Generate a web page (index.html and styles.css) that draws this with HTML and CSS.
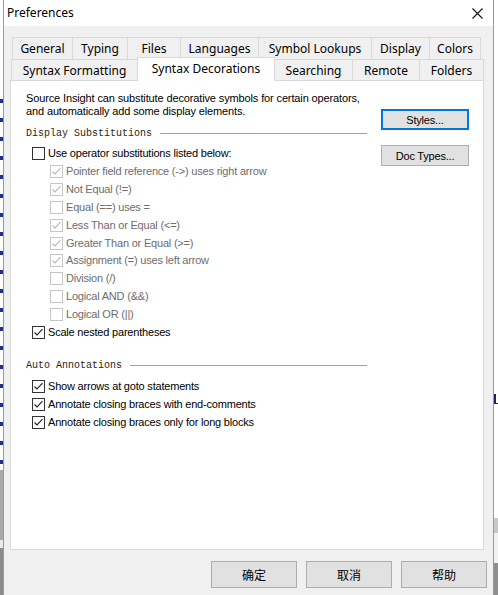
FILE: index.html
```html
<!DOCTYPE html>
<html>
<head>
<meta charset="utf-8">
<title>Preferences</title>
<link rel="stylesheet" href="styles.css">
</head>
<body>
<div class="screen">
  <div class="strip-left"></div>
  <div class="window">
    <div class="titlebar">
      <span class="title">Preferences</span>
      <svg class="close" width="11" height="11" viewBox="0 0 11 11"><path d="M0.5 0.5 L10.5 10.5 M10.5 0.5 L0.5 10.5" stroke="#111" stroke-width="1.1" fill="none"/></svg>
    </div>

    <div class="tabs">
      <div class="tabrow row1">
        <div class="tab w60">General</div>
        <div class="tab w55">Typing</div>
        <div class="tab w53">Files</div>
        <div class="tab w78">Languages</div>
        <div class="tab w113">Symbol Lookups</div>
        <div class="tab w58">Display</div>
        <div class="tab w51">Colors</div>
      </div>
      <div class="tabrow row2">
        <div class="tab w126">Syntax Formatting</div>
        <div class="tab w137 selected">Syntax Decorations</div>
        <div class="tab w78">Searching</div>
        <div class="tab w67">Remote</div>
        <div class="tab w64">Folders</div>
      </div>
    </div>

    <div class="panel">
      <div class="leftcol">
        <p class="intro">Source Insight can substitute decorative symbols for certain operators,<br>and automatically add some display elements.</p>

        <div class="group-head first"><span>Display Substitutions</span><i></i></div>

        <label class="row top main">
          <span class="box"></span>
          <span class="lbl">Use operator substitutions listed below:</span>
        </label>
        <label class="row sub dis">
          <span class="box"><svg viewBox="0 0 13 13"><path d="M2.5 6.5 L5 9 L10.5 3.2" /></svg></span>
          <span class="lbl">Pointer field reference (-&gt;) uses right arrow</span>
        </label>
        <label class="row sub dis">
          <span class="box"><svg viewBox="0 0 13 13"><path d="M2.5 6.5 L5 9 L10.5 3.2" /></svg></span>
          <span class="lbl">Not Equal (!=)</span>
        </label>
        <label class="row sub dis">
          <span class="box"></span>
          <span class="lbl">Equal (==) uses =</span>
        </label>
        <label class="row sub dis">
          <span class="box"><svg viewBox="0 0 13 13"><path d="M2.5 6.5 L5 9 L10.5 3.2" /></svg></span>
          <span class="lbl">Less Than or Equal (&lt;=)</span>
        </label>
        <label class="row sub dis">
          <span class="box"><svg viewBox="0 0 13 13"><path d="M2.5 6.5 L5 9 L10.5 3.2" /></svg></span>
          <span class="lbl">Greater Than or Equal (&gt;=)</span>
        </label>
        <label class="row sub dis">
          <span class="box"><svg viewBox="0 0 13 13"><path d="M2.5 6.5 L5 9 L10.5 3.2" /></svg></span>
          <span class="lbl">Assignment (=) uses left arrow</span>
        </label>
        <label class="row sub dis">
          <span class="box"></span>
          <span class="lbl">Division (/)</span>
        </label>
        <label class="row sub dis">
          <span class="box"></span>
          <span class="lbl">Logical AND (&amp;&amp;)</span>
        </label>
        <label class="row sub dis">
          <span class="box"></span>
          <span class="lbl">Logical OR (||)</span>
        </label>
        <label class="row main">
          <span class="box"><svg viewBox="0 0 13 13"><path d="M2.5 6.5 L5 9 L10.5 3.2" /></svg></span>
          <span class="lbl">Scale nested parentheses</span>
        </label>

        <div class="group-head second"><span>Auto Annotations</span><i></i></div>

        <label class="row main">
          <span class="box"><svg viewBox="0 0 13 13"><path d="M2.5 6.5 L5 9 L10.5 3.2" /></svg></span>
          <span class="lbl">Show arrows at goto statements</span>
        </label>
        <label class="row main">
          <span class="box"><svg viewBox="0 0 13 13"><path d="M2.5 6.5 L5 9 L10.5 3.2" /></svg></span>
          <span class="lbl">Annotate closing braces with end-comments</span>
        </label>
        <label class="row main">
          <span class="box"><svg viewBox="0 0 13 13"><path d="M2.5 6.5 L5 9 L10.5 3.2" /></svg></span>
          <span class="lbl">Annotate closing braces only for long blocks</span>
        </label>
      </div>

      <div class="rightcol">
        <button class="btn focus">Styles...</button>
        <button class="btn">Doc Types...</button>
      </div>
    </div>

    <div class="footer">
      <button class="dbtn">确定</button>
      <button class="dbtn">取消</button>
      <button class="dbtn">帮助</button>
    </div>
  </div>
  <div class="strip-right"><span class="frag"></span></div>
</div>
</body>
</html>
```

FILE: styles.css
```css
* { box-sizing: border-box; }

html, body {
  margin: 0;
  padding: 0;
  width: 498px;
  height: 595px;
  overflow: hidden;
  background: #ffffff;
}

.screen {
  display: flex;
  width: 498px;
  height: 595px;
}

.strip-left {
  width: 3px;
  flex: none;
  background:
    repeating-linear-gradient(180deg, transparent 0 7px, #1f2f8f 7px 11px, transparent 11px 19px) 0 92px / 3px 378px no-repeat,
    linear-gradient(180deg, #ffffff 0 470px, #a9a9a9 470px 540px, #ececec 540px 548px, #8c8c8c 548px 595px);
}

.strip-right {
  width: 4px;
  flex: none;
  position: relative;
  background: linear-gradient(180deg, #ffffff 0 518px, #c8c8c8 518px 533px, #f2f2f2 533px 563px, #8f8f8f 563px 595px);
}

.strip-right .frag {
  position: absolute;
  left: 0;
  top: 394px;
  width: 4px;
  height: 10px;
  border-left: 2px solid #20206a;
  border-bottom: 1px solid #20206a;
}

.window {
  width: 491px;
  flex: none;
  height: 595px;
  border-left: 1px solid #9a9a9a;
  border-right: 1px solid #9a9a9a;
  background: #f0f0f0;
  font-family: "Liberation Sans", Arial, sans-serif;
}

.titlebar {
  height: 26px;
  background: #ffffff;
  display: flex;
  align-items: center;
  justify-content: space-between;
  padding-left: 3px;
  padding-right: 10px;
}

.title {
  font-family: "Noto Sans", "Open Sans", sans-serif;
  font-size: 12px;
  color: #000;
  position: relative;
  top: -1px;
}

.close {
  display: block;
  margin-top: 1px;
}

.tabs {
  margin-top: 11px;
  font-family: "Noto Sans", "Open Sans", sans-serif;
  font-size: 12px;
  color: #000;
}

.tabrow {
  display: flex;
  height: 22px;
}

.row1 { padding-left: 8px; }
.row2 { padding-left: 7px; height: 21px; }

.tab {
  height: 22px;
  border: 1px solid #d9d9d9;
  border-bottom: none;
  margin-right: -1px;
  background: #f0f0f0;
  display: flex;
  align-items: center;
  justify-content: center;
  line-height: 1;
  padding-top: 1px;
}

.row2 .tab { height: 21px; padding-top: 2px; }

.tab.selected {
  background: #ffffff;
  height: 24px;
  margin-top: -2px;
  position: relative;
  z-index: 2;
  padding-top: 0;
  padding-bottom: 2px;
}

.w51 { width: 52px; }
.w53 { width: 54px; }
.w55 { width: 56px; }
.w58 { width: 59px; }
.w60 { width: 61px; }
.w64 { width: 65px; }
.w67 { width: 68px; }
.w78 { width: 79px; }
.w113 { width: 114px; }
.w126 { width: 127px; }
.w137 { width: 138px; }

.panel {
  margin-left: 6px;
  width: 474px;
  height: 470px;
  border: 1px solid #d9d9d9;
  background: #ffffff;
  display: flex;
  position: relative;
  z-index: 1;
  color: #000;
}

.leftcol {
  width: 356px;
  padding-left: 15px;
  padding-top: 11px;
}

.intro {
  margin: 0;
  font-size: 11px;
  line-height: 12.5px;
  letter-spacing: -0.13px;
}

.group-head {
  display: flex;
  align-items: center;
  height: 13px;
  width: 341px;
  font-family: "Liberation Mono", "Courier New", monospace;
  font-size: 10px;
  color: #2b2518;
}

.group-head span { white-space: pre; }

.group-head i {
  flex: 1;
  height: 0;
  border-top: 1px solid #a0a0a0;
  margin-left: 8px;
}

.group-head.first { margin-top: 10px; }
.group-head.second { margin-top: 18px; margin-bottom: 6px; }

.row {
  display: flex;
  align-items: center;
  height: 17.8px;
  font-size: 11px;
  letter-spacing: -0.2px;
  white-space: nowrap;
}

.row.top { height: 18px; margin-top: 4px; margin-bottom: 1px; }

.row.main { padding-left: 6px; }
.row.sub { padding-left: 24px; }

.box {
  width: 13px;
  height: 13px;
  flex: none;
  border: 1px solid #333333;
  background: #ffffff;
  margin-right: 3px;
  position: relative;
}

.box svg {
  position: absolute;
  left: -1px;
  top: -1px;
  width: 13px;
  height: 13px;
  fill: none;
  stroke: #222;
  stroke-width: 1.1;
}

.dis .box { border-color: #c6c6c6; }
.dis .box svg { stroke: #b8b8b8; }
.dis .lbl { color: #6d6d6d; }

.lbl { line-height: 1; }

.rightcol {
  padding-top: 28px;
  padding-left: 14px;
  display: flex;
  flex-direction: column;
  gap: 15px;
}

.btn {
  width: 88px;
  height: 21px;
  border: 1px solid #adadad;
  background: #e1e1e1;
  font-family: "Liberation Sans", Arial, sans-serif;
  font-size: 11px;
  letter-spacing: -0.2px;
  color: #000;
  padding: 0;
  margin: 0;
}

.btn.focus { border: 2px solid #0078d7; }

.footer {
  display: flex;
  justify-content: flex-end;
  gap: 9px;
  padding-right: 6px;
  margin-top: 11px;
}

.dbtn {
  width: 86px;
  height: 27px;
  border: 1px solid #adadad;
  background: #e1e1e1;
  font-family: "Noto Sans CJK SC", "Noto Sans", sans-serif;
  font-size: 12px;
  color: #000;
  padding: 0;
  margin: 0;
}
```
